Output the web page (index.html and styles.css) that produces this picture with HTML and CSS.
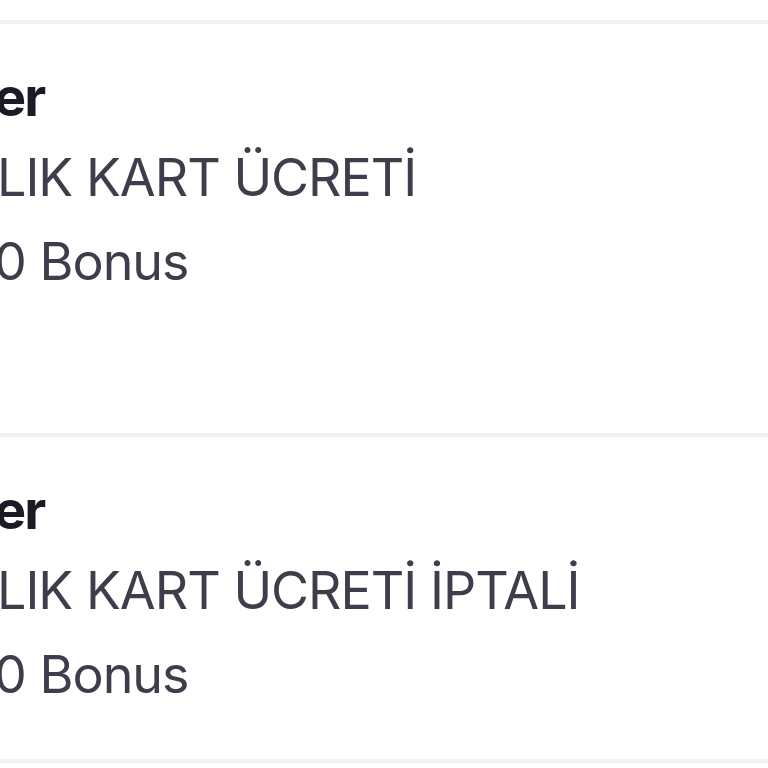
FILE: index.html
```html
<!DOCTYPE html>
<html>

<head>
    <title>Bonus Hareketleri</title>
    <link rel="stylesheet" href="styles.css">
</head>

<body>
    <div class="list">
        <div class="item item-tall">
            <div class="title">er</div>
            <div class="desc">LIK KART ÜCRETİ</div>
            <div class="amount">0 Bonus</div>
        </div>
        <div class="item">
            <div class="title">er</div>
            <div class="desc">LIK KART ÜCRETİ İPTALİ</div>
            <div class="amount">0 Bonus</div>
        </div>
        <div class="item item-next"></div>
    </div>
</body>

</html>
```

FILE: styles.css
```css
body {
    font-family: Inter, "Noto Sans", sans-serif;
    background-color: #fff;
    margin: 0;
    padding: 0;
    overflow: hidden;
}

.list {
    padding-top: 20px;
}

.item {
    border-top: 4px solid #f1f1f3;
    padding-top: 43px;
    height: 326px;
    box-sizing: border-box;
    overflow: hidden;
}

.item-tall {
    height: 413px;
}

.item-next {
    height: 10px;
}

.title {
    font-size: 54px;
    font-weight: 700;
    color: #1b1b26;
    line-height: 60px;
    letter-spacing: -1.8px;
    margin-left: -6px;
    margin-bottom: 9px;
}

.desc,
.amount {
    font-size: 52px;
    color: #3d3d4b;
    line-height: 84px;
    letter-spacing: -1px;
    white-space: nowrap;
}

.desc {
    margin-left: -3px;
}

.amount {
    margin-left: -6px;
}
```
